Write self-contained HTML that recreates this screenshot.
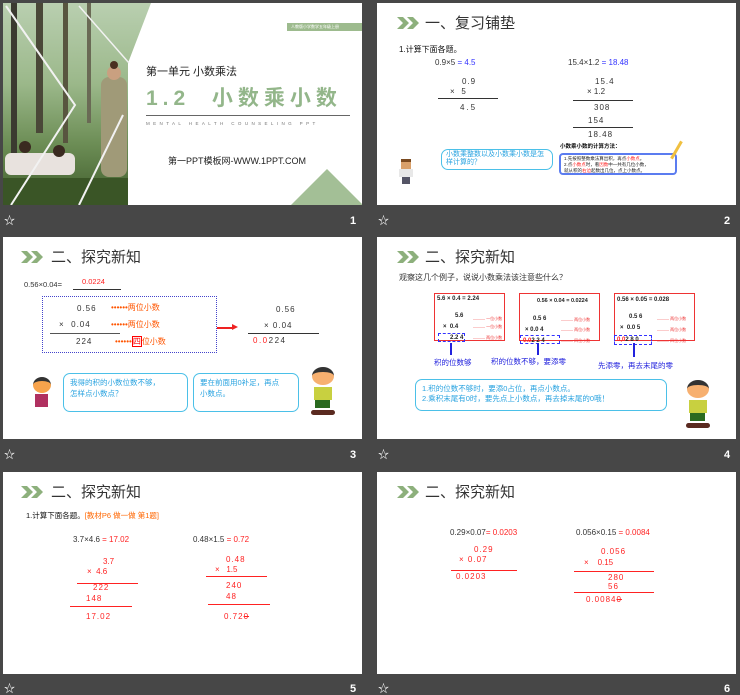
<!DOCTYPE html>
<html><head><meta charset="utf-8">
<style>
*{margin:0;padding:0;box-sizing:border-box}
body{width:740px;height:695px;background:#474747;position:relative;overflow:hidden;font-family:"Liberation Sans","Noto Sans CJK SC",sans-serif}
.s{position:absolute;width:359px;height:202px;background:#fff;overflow:hidden}
.t{position:absolute;white-space:nowrap;line-height:1}
.ft{position:absolute;color:#fff;font-size:11px;line-height:1}
.num{position:absolute;color:#fff;font-size:11px;font-weight:bold;line-height:1}
.ln{position:absolute;height:1px;background:#333}
.rl{position:absolute;height:1px;background:#f22}
.chev{position:absolute;left:20px;top:14px;width:24px;height:12px}
.h{position:absolute;left:48px;top:13px;font-size:15px;color:#333;line-height:1}
.r{color:#f22}
.b{color:#33f}
.bub{position:absolute;border:1.5px solid #4bc0e8;border-radius:7px;color:#29a3e0;font-size:7.5px;line-height:1.4;padding:4px 6px}
</style></head><body>

<!-- Slide 1 -->
<div class="s" style="left:3px;top:3px">
  <svg style="position:absolute;left:0;top:0" width="160" height="202" viewBox="0 0 160 202">
    <defs>
      <linearGradient id="g" x1="0" y1="0" x2="0" y2="1">
        <stop offset="0" stop-color="#b9cfb0"/>
        <stop offset="0.4" stop-color="#9bb88a"/>
        <stop offset="0.7" stop-color="#6c8d55"/>
        <stop offset="1" stop-color="#3f5c2c"/>
      </linearGradient>
      <clipPath id="c"><polygon points="0,0 148,0 125,60 125,202 0,202"/></clipPath>
    </defs>
    <g clip-path="url(#c)">
      <rect width="160" height="202" fill="url(#g)"/>
      <rect x="8" y="0" width="6" height="150" fill="#3b3a30"/>
      <rect x="33" y="0" width="7" height="130" fill="#4a4838"/>
      <rect x="60" y="0" width="5" height="140" fill="#58553f"/>
      <rect x="84" y="0" width="4" height="120" fill="#6a6a55"/>
      <rect x="98" y="74" width="26" height="100" rx="8" fill="#a09a78"/>
      <circle cx="111" cy="70" r="7" fill="#c9a080"/>
      <circle cx="111" cy="62" r="4" fill="#4a3020"/>
      <rect x="2" y="150" width="70" height="22" rx="6" fill="#e8e2de"/>
      <circle cx="22" cy="144" r="6" fill="#3a2a20"/>
      <circle cx="56" cy="148" r="6" fill="#3a2a20"/>
      <rect x="0" y="175" width="125" height="27" fill="#3a5526"/>
    </g>
    <polyline points="3,3 72,102 8,202" fill="none" stroke="#f2f2f2" stroke-width="2"/>
    <polyline points="76,3 126,60" fill="none" stroke="#f2f2f2" stroke-width="1.5"/>
    <polyline points="120,112 76,202" fill="none" stroke="#f2f2f2" stroke-width="2"/>
  </svg>
  <div style="position:absolute;left:284px;top:20px;width:76px;height:8px;background:#9dbb8e"></div>
  <div class="t" style="left:288px;top:22px;font-size:4px;color:#fff">人教版小学数学五年级上册</div>
  <div class="t" style="left:143px;top:64px;font-size:11px;color:#222">第一单元 小数乘法</div>
  <div class="t" style="left:143px;top:85px;font-size:21px;color:#93b68a;font-weight:bold;letter-spacing:5px">1.2&nbsp;&nbsp;小数乘小数</div>
  <div style="position:absolute;left:143px;top:112px;width:204px;height:1px;background:#666"></div>
  <div class="t" style="left:143px;top:119px;font-size:4.5px;color:#777;letter-spacing:3.4px">MENTAL HEALTH COUNSELING PPT</div>
  <div class="t" style="left:165px;top:154px;font-size:9px;color:#222">第一PPT模板网-WWW.1PPT.COM</div>
  <div style="position:absolute;left:288px;top:166px;width:0;height:0;border-left:36px solid transparent;border-right:36px solid transparent;border-bottom:36px solid #a3bf96"></div>
</div>
<div class="ft" style="left:4px;top:216px">☆</div><div class="num" style="left:350px;top:216px">1</div>

<!-- Slide 2 -->
<div class="s" style="left:377px;top:3px">
  <svg class="chev" viewBox="0 0 24 12"><path d="M0 0h6l6 6-6 6H0l6-6z M10 0h6l6 6-6 6h-6l6-6z" fill="#8db07c"/></svg>
  <div class="h">一、复习铺垫</div>
  <div class="t" style="left:22px;top:43px;font-size:8px;color:#111">1.计算下面各题。</div>
  <div class="t" style="left:58px;top:56px;font-size:8px;color:#333">0.9×5 <span class="b">= 4.5</span></div>
  <div class="t" style="left:191px;top:56px;font-size:8px;color:#333">15.4×1.2 <span class="b">= 18.48</span></div>
  <div class="t" style="left:85px;top:75px;font-size:8px;color:#333;letter-spacing:1px">0.9</div>
  <div class="t" style="left:73px;top:85px;font-size:8px;color:#333">×&nbsp;&nbsp;&nbsp;5</div>
  <div class="ln" style="left:61px;top:95px;width:60px"></div>
  <div class="t" style="left:83px;top:101px;font-size:8px;color:#333;letter-spacing:2px">4.5</div>
  <div class="t" style="left:218px;top:75px;font-size:8px;color:#333;letter-spacing:1px">15.4</div>
  <div class="t" style="left:210px;top:85px;font-size:8px;color:#333">× 1.2</div>
  <div class="ln" style="left:196px;top:97px;width:60px"></div>
  <div class="t" style="left:217px;top:101px;font-size:8px;color:#333;letter-spacing:1px">308</div>
  <div class="t" style="left:211px;top:114px;font-size:8px;color:#333;letter-spacing:1px">154</div>
  <div class="ln" style="left:196px;top:124px;width:60px"></div>
  <div class="t" style="left:211px;top:128px;font-size:8px;color:#333;letter-spacing:1px">18.48</div>
  <div class="t" style="left:183px;top:142px;font-size:5.5px;color:#111;font-weight:bold">小数乘小数的计算方法：</div>
  <div style="position:absolute;left:182px;top:150px;width:118px;height:22px;border:2px solid #5b7cf0;border-radius:4px;font-size:4.5px;line-height:6px;padding:1px 3px;color:#222">1.先按照整数乘法算出积，再点<span class="r">小数点</span>。<br>2.点<span class="r">小数点</span>时，看<span class="r">因数</span>中一共有几位小数，<br>就从积的<span class="r">右边</span>起数出几位，点上小数点。</div>
  <div style="position:absolute;left:298px;top:137px;width:3px;height:20px;background:#f0c040;transform:rotate(30deg)"></div>
  <div class="bub" style="left:64px;top:146px;width:112px;height:21px;font-size:7px;line-height:8px;padding:1px 4px">小数乘整数以及小数乘小数是怎样计算的？</div>
  <div style="position:absolute;left:24px;top:156px;width:10px;height:10px;background:#d9a06a;border-top:3px solid #7a4a20"></div>
  <div style="position:absolute;left:22px;top:166px;width:14px;height:8px;background:#e8e8e8"></div>
  <div style="position:absolute;left:25px;top:174px;width:8px;height:7px;background:#556"></div>
</div>
<div class="ft" style="left:378px;top:216px">☆</div><div class="num" style="left:724px;top:216px">2</div>

<!-- Slide 3 -->
<div class="s" style="left:3px;top:237px">
  <svg class="chev" style="left:18px" viewBox="0 0 24 12"><path d="M0 0h6l6 6-6 6H0l6-6z M10 0h6l6 6-6 6h-6l6-6z" fill="#8db07c"/></svg>
  <div class="h" style="left:48px">二、探究新知</div>
  <div class="t" style="left:21px;top:44px;font-size:7.5px;color:#333">0.56×0.04=</div>
  <div class="t" style="left:79px;top:41px;font-size:7.5px;color:#f22">0.0224</div>
  <div class="ln" style="left:70px;top:52px;width:48px"></div>
  <div style="position:absolute;left:39px;top:59px;width:175px;height:57px;border:1px dotted #44c"></div>
  <div class="t" style="left:74px;top:68px;font-size:8px;color:#333;letter-spacing:1px">0.56</div>
  <div class="t" style="left:56px;top:84px;font-size:8px;color:#333;letter-spacing:1px">×&nbsp;&nbsp;0.04</div>
  <div class="ln" style="left:47px;top:96px;width:70px;background:#555"></div>
  <div class="t" style="left:73px;top:101px;font-size:8px;color:#333;letter-spacing:1px">224</div>
  <div class="t" style="left:108px;top:67px;font-size:8px;color:#f50">••••••两位小数</div>
  <div class="t" style="left:108px;top:84px;font-size:8px;color:#f50">••••••两位小数</div>
  <div class="t" style="left:112px;top:101px;font-size:8px;color:#f50">••••••<span style="color:#f00;border:1px solid #f00">四</span>位小数</div>
  <div style="position:absolute;left:214px;top:90px;width:16px;height:1.5px;background:#e22"></div>
  <div style="position:absolute;left:229px;top:87px;border-left:6px solid #e22;border-top:3.5px solid transparent;border-bottom:3.5px solid transparent"></div>
  <div class="t" style="left:273px;top:69px;font-size:8px;color:#333;letter-spacing:1px">0.56</div>
  <div class="t" style="left:261px;top:85px;font-size:8px;color:#333;letter-spacing:1px">× 0.04</div>
  <div class="ln" style="left:245px;top:96px;width:71px"></div>
  <div class="t" style="left:250px;top:100px;font-size:8px;color:#333;letter-spacing:1.5px"><span class="r">0.0</span>224</div>
  <div class="bub" style="left:60px;top:136px;width:125px;height:39px">我得的积的小数位数不够，<br>怎样点小数点？</div>
  <div class="bub" style="left:190px;top:136px;width:106px;height:39px">要在前面用0补足，再点<br>小数点。</div>
  <div style="position:absolute;left:30px;top:140px;width:18px;height:16px;background:#f7a34c;border-radius:50%;border-top:4px solid #333"></div>
  <div style="position:absolute;left:32px;top:157px;width:13px;height:13px;background:#b03060"></div>
  <div style="position:absolute;left:309px;top:130px;width:22px;height:18px;background:#f7b070;border-radius:50%;border-top:5px solid #333"></div>
  <div style="position:absolute;left:311px;top:150px;width:18px;height:13px;background:#c8d040"></div>
  <div style="position:absolute;left:312px;top:163px;width:15px;height:8px;background:#2a6a20"></div>
  <div style="position:absolute;left:308px;top:173px;width:24px;height:5px;background:#5a2a20;border-radius:3px"></div>
</div>
<div class="ft" style="left:4px;top:450px">☆</div><div class="num" style="left:350px;top:450px">3</div>

<!-- Slide 4 -->
<div class="s" style="left:377px;top:237px">
  <svg class="chev" viewBox="0 0 24 12"><path d="M0 0h6l6 6-6 6H0l6-6z M10 0h6l6 6-6 6h-6l6-6z" fill="#8db07c"/></svg>
  <div class="h">二、探究新知</div>
  <div class="t" style="left:22px;top:37px;font-size:8px;color:#333">观察这几个例子，说说小数乘法该注意些什么？</div>
  <div style="position:absolute;left:57px;top:56px;width:71px;height:48px;border:1.5px solid #e33"></div>
  <div style="position:absolute;left:142px;top:56px;width:81px;height:48px;border:1.5px solid #e33"></div>
  <div style="position:absolute;left:237px;top:56px;width:81px;height:48px;border:1.5px solid #e33"></div>
  <div class="t" style="left:60px;top:59px;font-size:6px;color:#222;font-weight:bold">5.6 × 0.4 = 2.24</div>
  <div class="t" style="left:78px;top:76px;font-size:6px;color:#222;font-weight:bold">5.6</div>
  <div class="t" style="left:66px;top:87px;font-size:6px;color:#222;font-weight:bold">×&nbsp;&nbsp;0.4</div>
  <div class="t" style="left:73px;top:98px;font-size:6px;color:#222;font-weight:bold">2.2 4</div>
  <div style="position:absolute;left:61px;top:96px;width:27px;height:9px;border:1px dashed #33f"></div>
  <div class="t" style="left:160px;top:62px;font-size:5.5px;color:#222;font-weight:bold">0.56 × 0.04 = 0.0224</div>
  <div class="t" style="left:156px;top:79px;font-size:6px;color:#222;font-weight:bold">0.5 6</div>
  <div class="t" style="left:148px;top:90px;font-size:6px;color:#222;font-weight:bold">× 0.0 4</div>
  <div class="t" style="left:146px;top:101px;font-size:6px;color:#222;font-weight:bold"><span class="r">0.0</span>2 2 4</div>
  <div style="position:absolute;left:143px;top:98px;width:40px;height:9px;border:1px dashed #33f"></div>
  <div class="t" style="left:240px;top:60px;font-size:6px;color:#222;font-weight:bold">0.56 × 0.05 = 0.028</div>
  <div class="t" style="left:252px;top:77px;font-size:6px;color:#222;font-weight:bold">0.5 6</div>
  <div class="t" style="left:243px;top:88px;font-size:6px;color:#222;font-weight:bold">×&nbsp;&nbsp;0.0 5</div>
  <div class="t" style="left:240px;top:100px;font-size:6px;color:#222;font-weight:bold"><span class="r">0,0</span>2 8 0</div>
  <div style="position:absolute;left:237px;top:98px;width:38px;height:10px;border:1px dashed #33f"></div>
  <div class="t" style="left:96px;top:80px;font-size:4px;color:#e33">——— 一位小数</div>
  <div class="t" style="left:96px;top:88px;font-size:4px;color:#e33">——— 一位小数</div>
  <div class="t" style="left:96px;top:99px;font-size:4px;color:#e33">——— 两位小数</div>
  <div class="t" style="left:184px;top:81px;font-size:4px;color:#e33">——— 两位小数</div>
  <div class="t" style="left:184px;top:91px;font-size:4px;color:#e33">——— 两位小数</div>
  <div class="t" style="left:184px;top:102px;font-size:4px;color:#e33">——— 四位小数</div>
  <div class="t" style="left:280px;top:80px;font-size:4px;color:#e33">——— 两位小数</div>
  <div class="t" style="left:280px;top:91px;font-size:4px;color:#e33">——— 两位小数</div>
  <div class="t" style="left:280px;top:102px;font-size:4px;color:#e33">——— 四位小数</div>
  <div style="position:absolute;left:73px;top:106px;width:2px;height:12px;background:#22d"></div>
  <div style="position:absolute;left:160px;top:106px;width:2px;height:12px;background:#22d"></div>
  <div style="position:absolute;left:256px;top:106px;width:2px;height:14px;background:#22d"></div>
  <div class="t" style="left:57px;top:122px;font-size:7.5px;color:#22d">积的位数够</div>
  <div class="t" style="left:114px;top:121px;font-size:7.5px;color:#22d">积的位数不够，要添零</div>
  <div class="t" style="left:221px;top:125px;font-size:7.5px;color:#22d">先添零，再去末尾的零</div>
  <div class="bub" style="left:38px;top:142px;width:252px;height:32px;line-height:10px;font-size:7.5px;padding:4px 6px">1.积的位数不够时，要添0占位，再点小数点。<br>2.乘积末尾有0时，要先点上小数点，再去掉末尾的0哦！</div>
  <div style="position:absolute;left:310px;top:143px;width:22px;height:18px;background:#f7b070;border-radius:50%;border-top:5px solid #333"></div>
  <div style="position:absolute;left:312px;top:163px;width:18px;height:13px;background:#c8d040"></div>
  <div style="position:absolute;left:313px;top:176px;width:15px;height:8px;background:#2a6a20"></div>
  <div style="position:absolute;left:309px;top:186px;width:24px;height:5px;background:#5a2a20;border-radius:3px"></div>
</div>
<div class="ft" style="left:378px;top:450px">☆</div><div class="num" style="left:724px;top:450px">4</div>

<!-- Slide 5 -->
<div class="s" style="left:3px;top:472px">
  <svg class="chev" style="left:18px" viewBox="0 0 24 12"><path d="M0 0h6l6 6-6 6H0l6-6z M10 0h6l6 6-6 6h-6l6-6z" fill="#8db07c"/></svg>
  <div class="h" style="left:48px">二、探究新知</div>
  <div class="t" style="left:23px;top:40px;font-size:7.5px;color:#111">1.计算下面各题。<span style="color:#f60">[教材P6 做一做 第1题]</span></div>
  <div class="t" style="left:70px;top:64px;font-size:8px;color:#333">3.7×4.6 <span class="r">= 17.02</span></div>
  <div class="t" style="left:190px;top:64px;font-size:8px;color:#333">0.48×1.5 <span class="r">= 0.72</span></div>
  <div class="t" style="left:100px;top:86px;font-size:8px;color:#f22">3.7</div>
  <div class="t" style="left:84px;top:96px;font-size:8px;color:#f22">×&nbsp;&nbsp;4.6</div>
  <div class="rl" style="left:74px;top:111px;width:61px"></div>
  <div class="t" style="left:90px;top:112px;font-size:8px;color:#f22;letter-spacing:1px">222</div>
  <div class="t" style="left:83px;top:123px;font-size:8px;color:#f22;letter-spacing:1px">148</div>
  <div class="rl" style="left:67px;top:134px;width:62px"></div>
  <div class="t" style="left:83px;top:141px;font-size:8px;color:#f22;letter-spacing:1px">17.02</div>
  <div class="t" style="left:223px;top:84px;font-size:8px;color:#f22;letter-spacing:1px">0.48</div>
  <div class="t" style="left:212px;top:94px;font-size:8px;color:#f22">×&nbsp;&nbsp;&nbsp;1.5</div>
  <div class="rl" style="left:203px;top:104px;width:61px"></div>
  <div class="t" style="left:223px;top:110px;font-size:8px;color:#f22;letter-spacing:1px">240</div>
  <div class="t" style="left:223px;top:121px;font-size:8px;color:#f22;letter-spacing:1px">48</div>
  <div class="rl" style="left:205px;top:132px;width:62px"></div>
  <div class="t" style="left:221px;top:141px;font-size:8px;color:#f22;letter-spacing:1px">0.72<span style="text-decoration:line-through">0</span></div>
</div>
<div class="ft" style="left:4px;top:684px">☆</div><div class="num" style="left:350px;top:684px">5</div>

<!-- Slide 6 -->
<div class="s" style="left:377px;top:472px">
  <svg class="chev" viewBox="0 0 24 12"><path d="M0 0h6l6 6-6 6H0l6-6z M10 0h6l6 6-6 6h-6l6-6z" fill="#8db07c"/></svg>
  <div class="h">二、探究新知</div>
  <div class="t" style="left:73px;top:57px;font-size:8px;color:#333">0.29×0.07<span class="r">= 0.0203</span></div>
  <div class="t" style="left:199px;top:57px;font-size:8px;color:#333">0.056×0.15 <span class="r">= 0.0084</span></div>
  <div class="t" style="left:97px;top:74px;font-size:8px;color:#f22;letter-spacing:1px">0.29</div>
  <div class="t" style="left:82px;top:84px;font-size:8px;color:#f22;letter-spacing:1px">× 0.07</div>
  <div class="rl" style="left:74px;top:98px;width:66px"></div>
  <div class="t" style="left:79px;top:101px;font-size:8px;color:#f22;letter-spacing:1px">0.0203</div>
  <div class="t" style="left:224px;top:76px;font-size:8px;color:#f22;letter-spacing:1px">0.056</div>
  <div class="t" style="left:207px;top:87px;font-size:8px;color:#f22">×&nbsp;&nbsp;&nbsp;&nbsp;0.15</div>
  <div class="rl" style="left:197px;top:99px;width:80px"></div>
  <div class="t" style="left:231px;top:102px;font-size:8px;color:#f22;letter-spacing:1px">280</div>
  <div class="t" style="left:231px;top:111px;font-size:8px;color:#f22;letter-spacing:1px">56</div>
  <div class="rl" style="left:197px;top:120px;width:80px"></div>
  <div class="t" style="left:209px;top:124px;font-size:8px;color:#f22;letter-spacing:1px">0.0084<span style="text-decoration:line-through">0</span></div>
</div>
<div class="ft" style="left:378px;top:684px">☆</div><div class="num" style="left:724px;top:684px">6</div>

</body></html>
